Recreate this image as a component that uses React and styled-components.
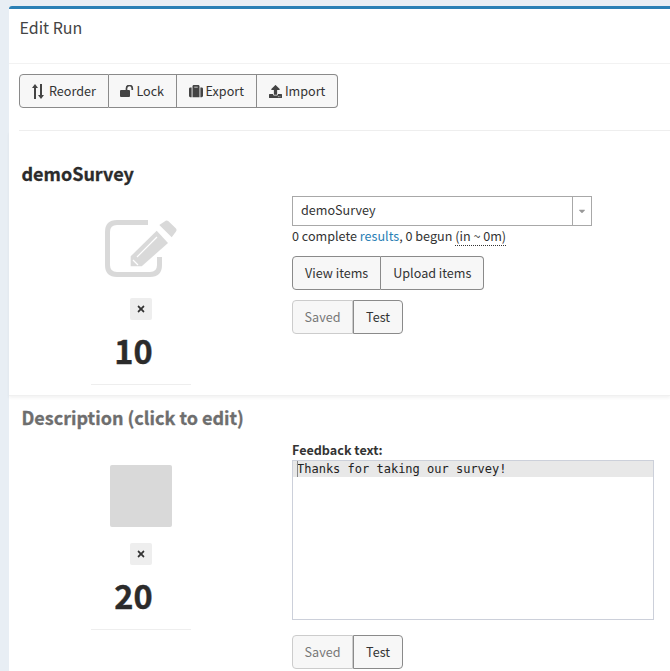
import React from "react";
import styled, { createGlobalStyle } from "styled-components";
import { FaUpload, FaSuitcase, FaTimes, FaCaretDown } from "react-icons/fa";

const GlobalStyle = createGlobalStyle`
  html, body {
    margin: 0;
    padding: 0;
    height: 671px;
    overflow: hidden;
    background: #e8eef4;
    font-family: "Noto Sans CJK SC", "Noto Sans", sans-serif;
    font-size: 12.6px;
    color: #333;
  }
`;

const Page = styled.div`
  padding: 6px 0 0 9px;
  width: 661px;
`;
const Box = styled.div`
  background: #fff;
  border-top: 3px solid #2a80b5;
  border-top-left-radius: 3px;
`;
const Header = styled.div`
  height: 55px;
  padding: 8px 10.5px 0;
  box-sizing: border-box;
  border-bottom: 1px solid #f2f2f2;
  font-size: 16px;
  line-height: 20px;
  color: #444;
`;
const Toolbar = styled.div`
  margin: 10px 0 0 10px;
  padding-bottom: 22px;
  border-bottom: 1px solid #eee;
`;
const Group = styled.div`
  display: inline-flex;
  vertical-align: top;
`;
const Button = styled.div`
  height: 34px;
  box-sizing: border-box;
  display: flex;
  align-items: center;
  gap: ${(p) => p.$gap || 0}px;
  padding: 0 ${(p) => p.$pad || 12}px;
  background: #f7f7f7;
  border: 1px solid ${(p) => (p.$muted ? "#ccc" : "#8a8a8a")};
  border-left-width: ${(p) => (p.$first ? 1 : 0)}px;
  border-radius: ${(p) => (p.$first ? "4px 0 0 4px" : p.$last ? "0 4px 4px 0" : "0")};
  color: ${(p) => (p.$muted ? "#777" : "#333")};
  line-height: 20px;
  white-space: nowrap;
  svg { color: #444; }
  ${(p) => p.$joined && "border-left: 1px solid #8a8a8a;"}
`;
const Section = styled.div`
  padding: ${(p) => p.$top}px 0 0 13px;
  height: ${(p) => p.$height}px;
  box-sizing: border-box;
  ${(p) => p.$shadow && "border-bottom: 1px solid #f0f0f0; box-shadow: 0 2px 3px rgba(0,0,0,0.05);"}
`;
const Title = styled.div`
  font-size: 18px;
  font-weight: 700;
  line-height: 26px;
  margin-left: -0.5px;
  -webkit-text-stroke: 0.3px currentColor;
  color: ${(p) => (p.$muted ? "#6e6e6e" : "#2b2b2b")};
`;
const Columns = styled.div`
  display: grid;
  grid-template-columns: 270px 362px;
  margin-top: ${(p) => p.$top}px;
`;
const Left = styled.div`
  display: flex;
  flex-direction: column;
  align-items: center;
  width: 100px;
  margin-left: 69px;
`;
const IconSlot = styled.div`
  height: 62px;
  display: flex;
  align-items: center;
  justify-content: center;
  color: #d9d9d9;
  margin-top: ${(p) => p.$top}px;
  margin-bottom: ${(p) => p.$bottom}px;
`;
const Placeholder = styled.div`
  width: 62px;
  height: 62px;
  background: #d9d9d9;
  border-radius: 2px;
`;
const Remove = styled.div`
  width: 22px;
  height: 22px;
  background: #eee;
  border-radius: 2px;
  display: flex;
  align-items: center;
  justify-content: center;
  color: #333;
`;
const Order = styled.div`
  font-size: 32.5px;
  font-weight: 700;
  line-height: 44px;
  margin-top: 8px;
  width: 100%;
  text-align: center;
  margin-left: -15px;
  -webkit-text-stroke: 0.4px currentColor;
  color: #2b2b2b;
`;
const Rule = styled.div`
  width: 100%;
  height: 1px;
  background: #eee;
  margin-top: 12px;
`;
const Select = styled.div`
  width: 300px;
  height: 30px;
  box-sizing: border-box;
  display: flex;
  border: 1px solid #a8a8a8;
  color: #333;
`;
const SelectValue = styled.div`
  flex: 1;
  padding-left: 8px;
  line-height: 26px;
`;
const SelectArrow = styled.div`
  width: 18px;
  border-left: 1px solid #a8a8a8;
  display: flex;
  align-items: center;
  justify-content: center;
  color: #999;
`;
const Stats = styled.div`
  line-height: 20px;
  margin: 0 0 10px;
`;
const Link = styled.span`
  color: #2a80b5;
`;
const Hint = styled.span`
  border-bottom: 1px dotted #333;
`;
const Spaced = styled.div`
  margin-bottom: 10px;
`;
const Label = styled.div`
  font-weight: 700;
  line-height: 14px;
  margin-top: 12px;
`;
const Editor = styled.div`
  width: 362px;
  height: 160px;
  box-sizing: border-box;
  border: 1px solid #ccd0da;
  margin: 3px 0 15px;
`;
const ActiveLine = styled.div`
  height: 16px;
  background: #e8e8e8;
  padding-left: 4px;
  font-family: "DejaVu Sans Mono", monospace;
  font-size: 12px;
  line-height: 16px;
  color: #222;
  white-space: pre;
  position: relative;
  &::before {
    content: "";
    position: absolute;
    left: 4px;
    top: 0;
    width: 1px;
    height: 16px;
    background: #888;
  }
`;

const ReorderIcon = () => (
  <svg width="12" height="15" viewBox="0 0 12 15" fill="currentColor">
    <path d="M3 0L6 4H4V15H2V4H0Z" />
    <path d="M9 15L12 11H10V0H8V11H6Z" />
  </svg>
);

const UnlockIcon = () => (
  <svg width="14" height="12" viewBox="0 0 14 12">
    <rect x="0" y="5" width="10" height="7" rx="1" fill="currentColor" />
    <path d="M6.5 5V3.4a2.9 2.9 0 0 1 5.8 0V5" fill="none" stroke="currentColor" strokeWidth="1.7" />
  </svg>
);

const EditIcon = () => (
  <svg width="73" height="60" viewBox="0 0 73 60">
    <path
      d="M43 3.5H12Q2.5 3.5 2.5 13V46Q2.5 55.5 12 55.5H45Q54.5 55.5 54.5 46V38"
      fill="none"
      stroke="currentColor"
      strokeWidth="5"
    />
    <path d="M25.7 37.3L51.7 11.7L63 24L36.7 47.3H25.7Z" fill="currentColor" />
    <path d="M60.7 1.7Q62 1 63.5 2.3L71 9.5Q72.3 11 71 12.5L66.7 18.3L54.3 6Z" fill="currentColor" />
    <path d="M32 38L52 18" stroke="#fff" strokeWidth="1.2" />
    <path d="M28 41L33 46" stroke="#fff" strokeWidth="1.2" />
  </svg>
);

const tools = [
  { icon: <ReorderIcon />, label: "Reorder", gap: 5, pad: 12 },
  { icon: <UnlockIcon />, label: "Lock", gap: 2, pad: 11.5 },
  { icon: <FaSuitcase size={14} />, label: "Export", gap: 3, pad: 12 },
  { icon: <FaUpload size={13} />, label: "Import", gap: 3, pad: 12 },
];

const SaveTest = () => (
  <Group>
    <Button $first $muted $pad={11.6}>Saved</Button>
    <Button $last $joined>Test</Button>
  </Group>
);

const App = () => (
  <Page>
    <GlobalStyle />
    <Box>
      <Header>Edit Run</Header>
      <Toolbar>
        <Group>
          {tools.map((tool, i) => (
            <Button key={tool.label} $first={i === 0} $last={i === tools.length - 1} $gap={tool.gap} $pad={tool.pad}>
              {tool.icon}
              {tool.label}
            </Button>
          ))}
        </Group>
      </Toolbar>
      <Section $top={29} $height={265} $shadow>
        <Title>demoSurvey</Title>
        <Columns $top={10}>
          <Left>
            <IconSlot $top={22} $bottom={18}>
              <EditIcon />
            </IconSlot>
            <Remove><FaTimes size={10} /></Remove>
            <Order>10</Order>
            <Rule />
          </Left>
          <div>
            <Select>
              <SelectValue>demoSurvey</SelectValue>
              <SelectArrow><FaCaretDown size={10} /></SelectArrow>
            </Select>
            <Stats>
              0 complete <Link>results</Link>, 0 begun <Hint>(in ~ 0m)</Hint>
            </Stats>
            <Spaced>
              <Group>
                <Button $first>View items</Button>
                <Button $last>Upload items</Button>
              </Group>
            </Spaced>
            <SaveTest />
          </div>
        </Columns>
      </Section>
      <Section $top={8} $height={276}>
        <Title $muted>Description (click to edit)</Title>
        <Columns $top={1}>
          <Left>
            <IconSlot $top={34} $bottom={16}>
              <Placeholder />
            </IconSlot>
            <Remove><FaTimes size={10} /></Remove>
            <Order>20</Order>
            <Rule />
          </Left>
          <div>
            <Label>Feedback text:</Label>
            <Editor>
              <ActiveLine>Thanks for taking our survey!</ActiveLine>
            </Editor>
            <SaveTest />
          </div>
        </Columns>
      </Section>
    </Box>
  </Page>
);

export default App;
